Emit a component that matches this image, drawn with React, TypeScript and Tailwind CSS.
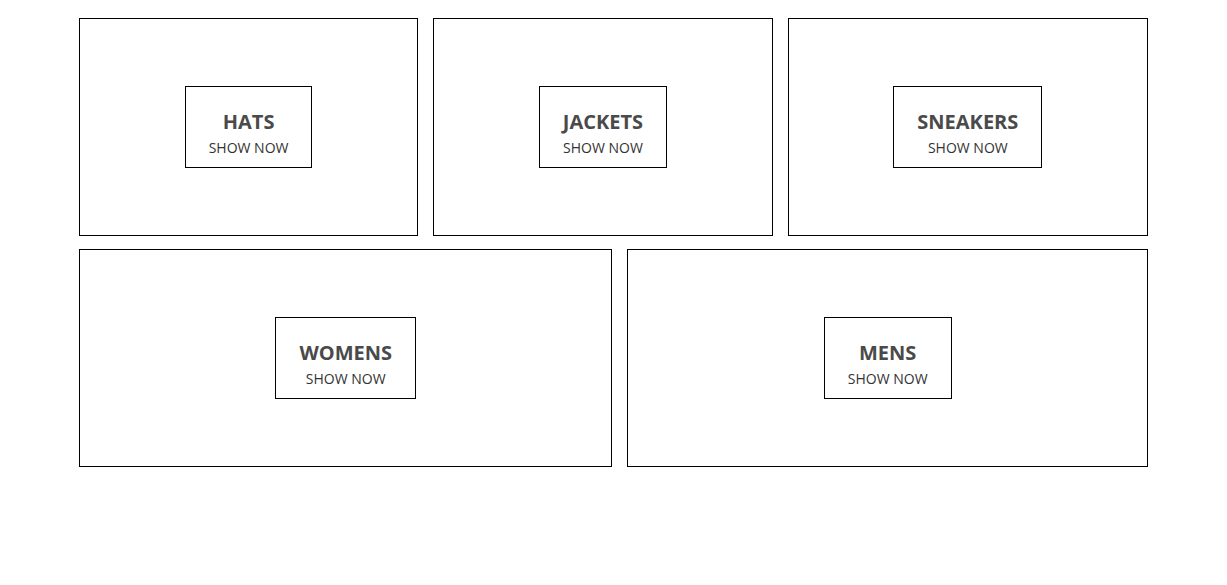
const sections = [
  { id: 1, title: 'hats' },
  { id: 2, title: 'jackets' },
  { id: 3, title: 'sneakers' },
  { id: 4, title: 'womens' },
  { id: 5, title: 'mens' },
];

function MenuItem({ title }: { title: string }) {
  return (
    <div className="flex-auto min-w-[30%] h-[218px] mx-[7.5px] mb-[13px] border border-black flex items-center justify-center cursor-pointer">
      <div className="h-[82px] px-[23px] pt-[23px] border border-black bg-white flex flex-col items-center">
        <h1 className="text-[20px] leading-[24px] font-bold text-[#4a4a4a] uppercase">{title}</h1>
        <span className="mt-[5px] text-[14px] leading-[18px] font-normal text-[#333]">SHOW NOW</span>
      </div>
    </div>
  );
}

export default function App() {
  return (
    <div className="min-h-[585px] bg-white pt-[18px] flex justify-center items-start" style={{ fontFamily: '"Open Sans", "Noto Sans", sans-serif' }}>
      <div className="w-[1084px] flex flex-wrap content-start justify-between">
        {sections.map(s => (
          <MenuItem key={s.id} title={s.title} />
        ))}
      </div>
    </div>
  );
}
